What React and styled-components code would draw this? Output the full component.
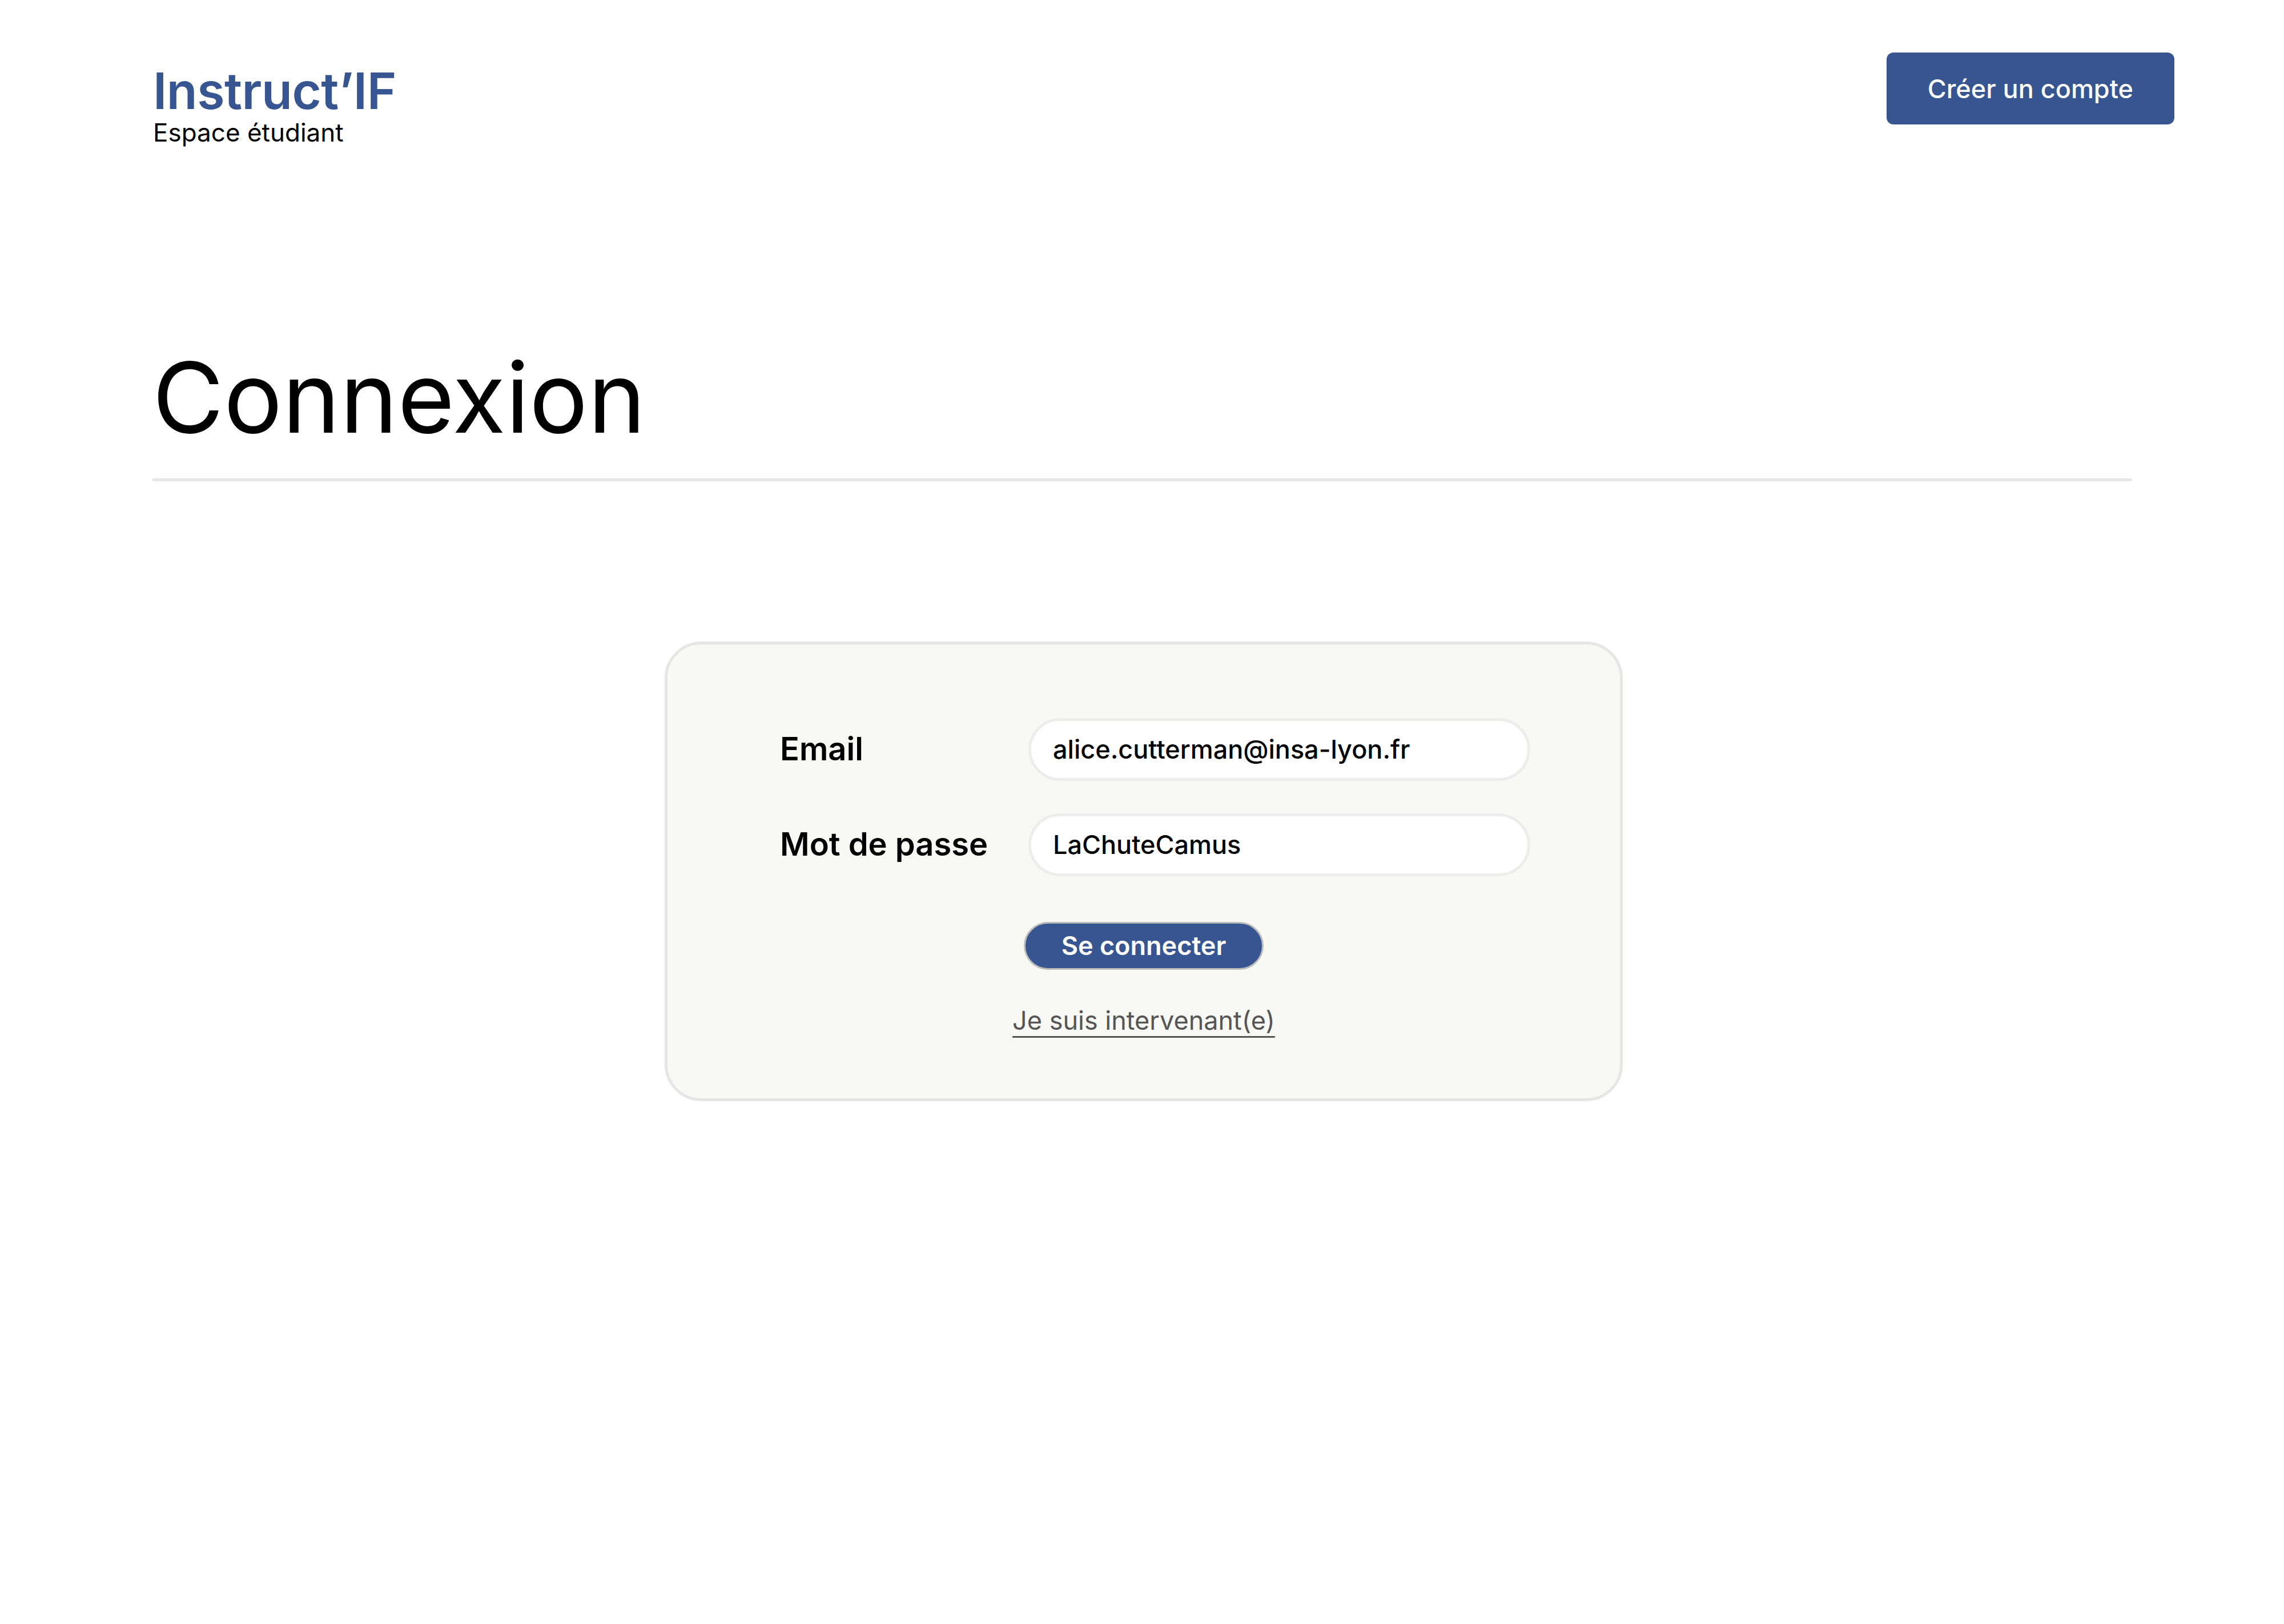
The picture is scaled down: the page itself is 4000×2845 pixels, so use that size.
import styled, { createGlobalStyle } from "styled-components";

const GlobalStyle = createGlobalStyle`
  html, body {
    margin: 0;
    padding: 0;
    background: #ffffff;
  }
  body {
    font-family: Inter, "Noto Sans", "Liberation Sans", sans-serif;
    color: #000;
  }
  * {
    box-sizing: border-box;
  }
`;

const BLUE = "#375590";

const Page = styled.div`
  width: 4000px;
  min-height: 2845px;
  background: #fff;
`;

const Header = styled.header`
  display: flex;
  justify-content: space-between;
  align-items: flex-start;
  padding: 92px 192px 0 268px;
`;

const Brand = styled.div`
  display: flex;
  flex-direction: column;
  margin-top: 19px;
`;

const Logo = styled.div`
  font-size: 88px;
  font-weight: 600;
  line-height: 1.1;
  color: ${BLUE};
  letter-spacing: -0.5px;
`;

const Subtitle = styled.div`
  margin-top: 2px;
  font-size: 44px;
  line-height: 1;
  font-weight: 400;
`;

const SignupButton = styled.button`
  height: 126px;
  padding: 0 72px;
  border: none;
  border-radius: 12px;
  background: ${BLUE};
  color: #fff;
  font-family: inherit;
  font-size: 45px;
  font-weight: 500;
  cursor: pointer;
`;

const Main = styled.main`
  padding: 0 267px;
`;

const Title = styled.h1`
  margin: 339px 0 0;
  font-size: 171px;
  font-weight: 400;
  line-height: 1.2;
`;

const Divider = styled.hr`
  margin: 40px 0 0;
  height: 5px;
  border: none;
  background: #e6e6e6;
`;

const Card = styled.section`
  width: 1678px;
  margin: 281px 0 0 897px;
  padding: 129px 0 109px;
  border: 5px solid #e6e6e6;
  border-radius: 64px;
  background: #f8f8f4;
`;

const Form = styled.div`
  display: grid;
  grid-template-columns: 435px 879px;
  justify-content: center;
  padding-left: 40px;
  row-gap: 57px;
  align-items: center;
`;

const Label = styled.label`
  font-size: 56px;
  font-weight: 600;
  line-height: 1.2;
`;

const Field = styled.input`
  height: 110px;
  width: 100%;
  padding: 0 38px;
  border: 5px solid #ededed;
  border-radius: 55px;
  background: #fff;
  color: #000;
  font-family: inherit;
  font-size: 45px;
  font-weight: 500;
  outline: none;
`;

const Actions = styled.div`
  display: flex;
  flex-direction: column;
  align-items: center;
  gap: 62px;
  margin-top: 80px;
`;

const SubmitButton = styled.button`
  padding: 12px 63px;
  border: 3px solid #bdbdbd;
  border-radius: 50px;
  background: ${BLUE};
  color: #fff;
  font-family: inherit;
  font-size: 45px;
  font-weight: 600;
  line-height: 1.2;
  cursor: pointer;
`;

const SwitchLink = styled.a`
  font-size: 45px;
  line-height: 1.2;
  color: #555;
  text-decoration: underline;
  text-decoration-thickness: 3px;
  text-underline-offset: 11px;
  cursor: pointer;
`;

export default function App() {
  return (
    <Page>
      <GlobalStyle />
      <Header>
        <Brand>
          <Logo>Instruct’IF</Logo>
          <Subtitle>Espace étudiant</Subtitle>
        </Brand>
        <SignupButton>Créer un compte</SignupButton>
      </Header>

      <Main>
        <Title>Connexion</Title>
        <Divider />

        <Card>
          <Form>
            <Label htmlFor="email">Email</Label>
            <Field id="email" type="text" defaultValue="alice.cutterman@insa-lyon.fr" />
            <Label htmlFor="password">Mot de passe</Label>
            <Field id="password" type="text" defaultValue="LaChuteCamus" />
          </Form>
          <Actions>
            <SubmitButton>Se connecter</SubmitButton>
            <SwitchLink>Je suis intervenant(e)</SwitchLink>
          </Actions>
        </Card>
      </Main>
    </Page>
  );
}
